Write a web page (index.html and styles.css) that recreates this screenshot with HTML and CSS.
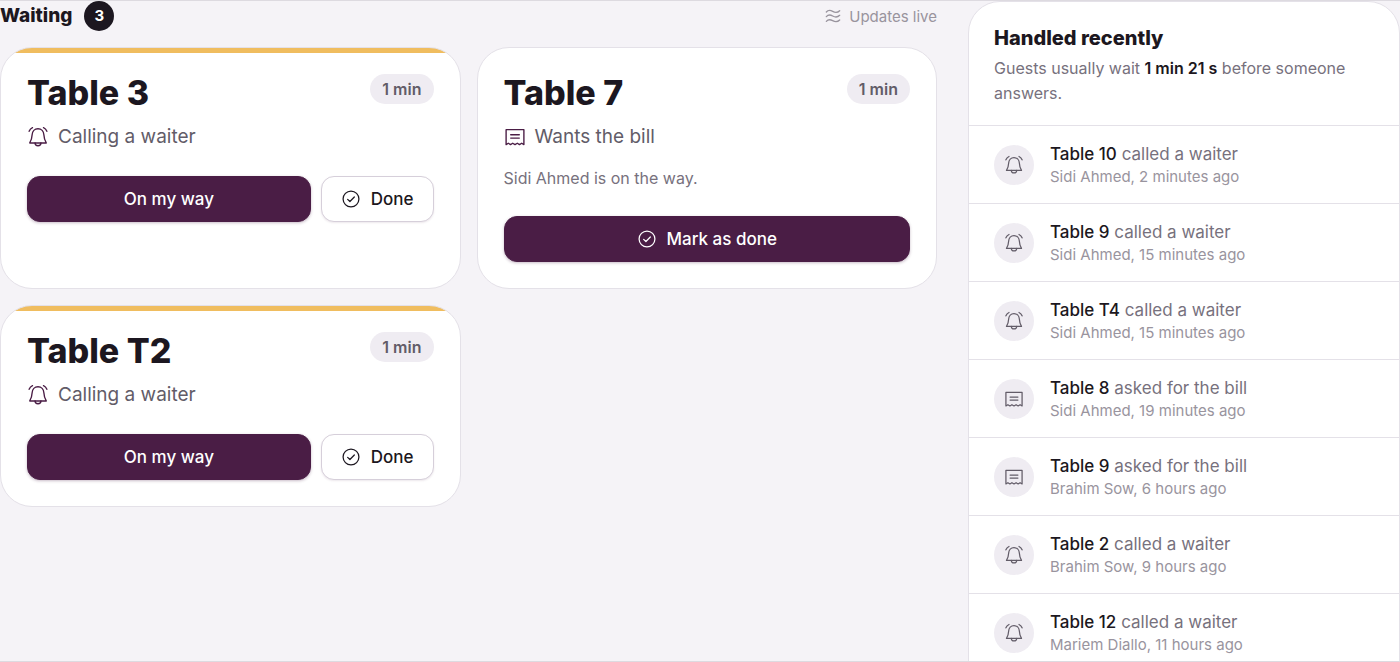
FILE: index.html
```
<!DOCTYPE html>
<html lang="en">
<head>
    <meta charset="UTF-8">
    <meta name="viewport" content="width=device-width, initial-scale=1.0">
    <title>Waiter calls</title>
    <link rel="stylesheet" href="styles.css">
</head>
<body>
    <!-- shared icons -->
    <svg class="sprite" aria-hidden="true">
        <symbol id="bell" viewBox="0 0 24 24">
            <path d="M12 3C8.3 3 5.8 5.9 5.6 9.5 5.4 13 4.900 15.500 3 18.500H21C19.100 15.500 18.600 13 18.400 9.500 18.200 5.900 15.700 3 12 3Z"/>
            <path d="M8.8 18.5c0 1.8 1.4 3 3.2 3s3.2-1.2 3.2-3"/>
            <path d="M2.3 5.8C3 4 4.300 2.600 6 1.800M21.700 5.800C21 4 19.700 2.600 18 1.800"/>
        </symbol>
        <symbol id="bill" viewBox="0 0 24 24">
            <path d="M2.300 4H21.700V20.300l-2.400-1.500-2.400 1.500-2.400-1.500-2.500 1.500-2.500-1.500-2.400 1.500-2.400-1.500-2.400 1.500Z"/>
            <path d="M7.300 9.600H16.700M7.300 13.200H16.700"/>
        </symbol>
        <symbol id="check" viewBox="0 0 24 24">
            <circle cx="12" cy="12" r="9.5"/>
            <path d="M8 12.400l2.700 2.600 5.300-5.400"/>
        </symbol>
        <symbol id="waves" viewBox="0 0 24 24">
            <path d="M2 6C5 2.500 8 3 11.500 5S18.500 7.500 22 4M2 13C5 9.500 8 10 11.500 12S18.500 14.500 22 11M2 20C5 16.500 8 17 11.500 19S18.500 21.500 22 18"/>
        </symbol>
    </svg>

    <div class="board">
        <main class="waiting">
            <header class="waiting-head">
                <h1>Waiting</h1>
                <span class="count">3</span>
                <p class="live"><svg class="icon"><use href="#waves"/></svg>Updates live</p>
            </header>

            <div class="cards">
                <article class="card new">
                    <div class="card-top">
                        <h2>Table 3</h2>
                        <span class="time">1 min</span>
                    </div>
                    <p class="request"><svg class="icon"><use href="#bell"/></svg>Calling a waiter</p>
                    <div class="actions">
                        <button type="button" class="btn primary">On my way</button>
                        <button type="button" class="btn"><svg class="icon"><use href="#check"/></svg>Done</button>
                    </div>
                </article>

                <article class="card">
                    <div class="card-top">
                        <h2>Table 7</h2>
                        <span class="time">1 min</span>
                    </div>
                    <p class="request"><svg class="icon"><use href="#bill"/></svg>Wants the bill</p>
                    <p class="note">Sidi Ahmed is on the way.</p>
                    <div class="actions">
                        <button type="button" class="btn primary"><svg class="icon"><use href="#check"/></svg>Mark as done</button>
                    </div>
                </article>

                <article class="card new">
                    <div class="card-top">
                        <h2>Table T2</h2>
                        <span class="time">1 min</span>
                    </div>
                    <p class="request"><svg class="icon"><use href="#bell"/></svg>Calling a waiter</p>
                    <div class="actions">
                        <button type="button" class="btn primary">On my way</button>
                        <button type="button" class="btn"><svg class="icon"><use href="#check"/></svg>Done</button>
                    </div>
                </article>
            </div>
        </main>

        <aside class="handled">
            <header class="handled-head">
                <h2>Handled recently</h2>
                <p>Guests usually wait <strong>1 min 21 s</strong> before someone answers.</p>
            </header>
            <ul>
                <li>
                    <span class="badge"><svg class="icon"><use href="#bell"/></svg></span>
                    <div>
                        <p class="what"><strong>Table 10</strong> called a waiter</p>
                        <p class="who">Sidi Ahmed, 2 minutes ago</p>
                    </div>
                </li>
                <li>
                    <span class="badge"><svg class="icon"><use href="#bell"/></svg></span>
                    <div>
                        <p class="what"><strong>Table 9</strong> called a waiter</p>
                        <p class="who">Sidi Ahmed, 15 minutes ago</p>
                    </div>
                </li>
                <li>
                    <span class="badge"><svg class="icon"><use href="#bell"/></svg></span>
                    <div>
                        <p class="what"><strong>Table T4</strong> called a waiter</p>
                        <p class="who">Sidi Ahmed, 15 minutes ago</p>
                    </div>
                </li>
                <li>
                    <span class="badge"><svg class="icon"><use href="#bill"/></svg></span>
                    <div>
                        <p class="what"><strong>Table 8</strong> asked for the bill</p>
                        <p class="who">Sidi Ahmed, 19 minutes ago</p>
                    </div>
                </li>
                <li>
                    <span class="badge"><svg class="icon"><use href="#bill"/></svg></span>
                    <div>
                        <p class="what"><strong>Table 9</strong> asked for the bill</p>
                        <p class="who">Brahim Sow, 6 hours ago</p>
                    </div>
                </li>
                <li>
                    <span class="badge"><svg class="icon"><use href="#bell"/></svg></span>
                    <div>
                        <p class="what"><strong>Table 2</strong> called a waiter</p>
                        <p class="who">Brahim Sow, 9 hours ago</p>
                    </div>
                </li>
                <li>
                    <span class="badge"><svg class="icon"><use href="#bell"/></svg></span>
                    <div>
                        <p class="what"><strong>Table 12</strong> called a waiter</p>
                        <p class="who">Mariem Diallo, 11 hours ago</p>
                    </div>
                </li>
            </ul>
        </aside>
    </div>
</body>
</html>
```
FILE: styles.css
```
*{
    margin: 0;
    padding: 0;
    box-sizing: border-box;
}
body{
    font-family: Inter, "Liberation Sans", sans-serif;
    background: #f5f3f7;
    color: #1c1720;
}
.sprite{
    display: none;
}
.icon{
    width: 20px;
    height: 20px;
    flex: none;
    fill: none;
    stroke: currentColor;
    stroke-width: 1.5;
    stroke-linecap: round;
    stroke-linejoin: round;
}
.board{
    height: 100vh;
    overflow: hidden;
    display: grid;
    grid-template-columns: minmax(0, 1fr) 432px;
    gap: 31px;
    align-items: start;
    border-top: 1px solid #dddae0;
    border-bottom: 1px solid #dddae0;
}

/* waiting */
.waiting-head{
    display: flex;
    align-items: center;
    gap: 12px;
    margin-bottom: 16px;
}
.waiting-head h1{
    font-size: 19px;
    font-weight: 800;
    line-height: 24px;
}
.count{
    width: 30px;
    height: 30px;
    border-radius: 50%;
    background: #1c1720;
    color: #fff;
    font-size: 15px;
    font-weight: 700;
    line-height: 30px;
    text-align: center;
}
.live{
    display: flex;
    align-items: center;
    gap: 8px;
    margin-left: auto;
    font-size: 15px;
    color: #99949e;
}
.live .icon{
    width: 16px;
    height: 16px;
    stroke-width: 2;
}
.cards{
    display: grid;
    grid-template-columns: 1fr 1fr;
    gap: 16px;
}
.card{
    background: #fff;
    border: 1px solid #e4e1e8;
    border-radius: 32px;
    padding: 26px;
}
.card.new{
    background: linear-gradient(#f0bd5f, #f0bd5f) top / 100% 5px no-repeat #fff;
}
.card-top{
    display: flex;
    justify-content: space-between;
    align-items: flex-start;
    margin-bottom: 12px;
}
.card h2{
    font-size: 34px;
    font-weight: 800;
    line-height: 38px;
}
.time{
    padding: 0 12px;
    border-radius: 15px;
    background: #efecf2;
    color: #625c68;
    font-size: 16px;
    font-weight: 600;
    line-height: 30px;
}
.request{
    display: flex;
    align-items: center;
    gap: 9px;
    font-size: 19px;
    line-height: 26px;
    color: #625c68;
}
.request .icon{
    width: 22px;
    height: 22px;
    color: #4a1d45;
}
.note{
    margin-top: 16px;
    font-size: 16px;
    line-height: 24px;
    color: #77717d;
}
.actions{
    display: flex;
    gap: 10px;
    margin-top: 26px;
}
.btn{
    display: flex;
    align-items: center;
    justify-content: center;
    gap: 10px;
    height: 46px;
    padding: 0 19px;
    border: 1px solid #d6cfda;
    border-radius: 13px;
    background: #fff;
    color: #1c1720;
    font-family: inherit;
    font-size: 17px;
    font-weight: 500;
    box-shadow: 0 1px 2px rgba(74, 29, 69, 0.1);
    cursor: pointer;
}
.btn.primary{
    flex: 1;
    border-color: #4a1d45;
    background: #4a1d45;
    color: #fff;
    box-shadow: 0 1px 3px rgba(74, 29, 69, 0.3);
}

/* handled */
.handled{
    background: #fff;
    border: 1px solid #e4e1e8;
    border-radius: 32px;
    padding-bottom: 32px;
}
.handled-head{
    padding: 23px 25px 19px;
}
.handled-head h2{
    font-size: 20px;
    font-weight: 800;
    line-height: 26px;
    margin-bottom: 5px;
}
.handled-head p{
    font-size: 16px;
    line-height: 25px;
    color: #77717d;
}
.handled strong{
    color: #1c1720;
    font-weight: 600;
}
.handled ul{
    list-style: none;
}
.handled li{
    display: flex;
    align-items: center;
    gap: 16px;
    padding: 16px 25px;
    border-top: 1px solid #e4e1e8;
}
.badge{
    display: flex;
    align-items: center;
    justify-content: center;
    width: 40px;
    height: 40px;
    border-radius: 50%;
    background: #efecf2;
    color: #625c68;
}
.what{
    font-size: 17px;
    line-height: 24px;
    color: #77717d;
}
.handled .what strong{
    font-weight: 500;
}
.who{
    font-size: 15px;
    line-height: 21px;
    color: #99949e;
}
```
